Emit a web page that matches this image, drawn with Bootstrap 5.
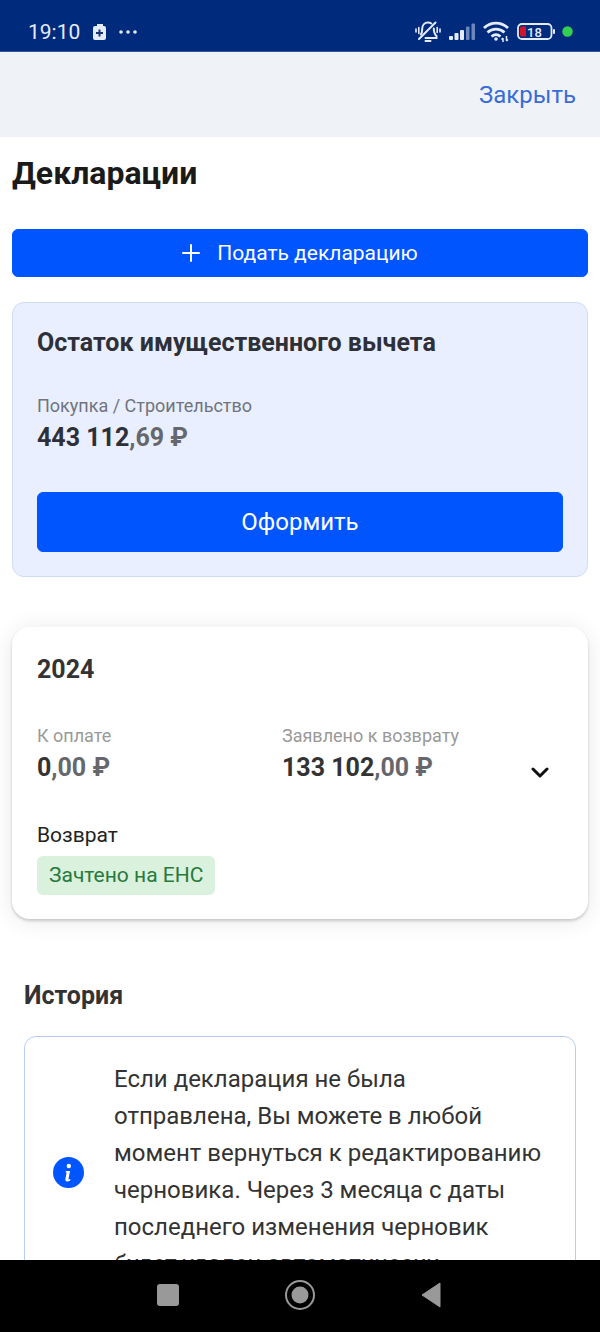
<!DOCTYPE html>
<html lang="ru">
<head>
<meta charset="utf-8">
<meta name="viewport" content="width=device-width, initial-scale=1">
<title>Декларации</title>
<link href="https://cdn.jsdelivr.net/npm/bootstrap@5.3.0/dist/css/bootstrap.min.css" rel="stylesheet">
<style>
  body { font-family: Roboto, "Noto Sans", sans-serif; color: #333; background: #fff; }
  svg { display: block; flex: none; }
  .status-bar { background: #002a7c; color: #e4ecfb; height: 52px; padding: 14px 27px 0 28px; gap: 8px; border-bottom: 1px solid #33589b; }
  .clock { font-size: 21px; line-height: 36px; }
  .battery { margin-right: -2px; }
  .top-bar { background: #eff3f7; height: 85px; padding: 0 24px; }
  .close-link { color: #3a6cd8; font-size: 24px; line-height: 36px; }
  .screen { min-height: 0; overflow-y: auto; scrollbar-width: none; padding: 16px 12px 24px; }
  .screen::-webkit-scrollbar { display: none; }
  .page-title { font-size: 32px; line-height: 40px; font-weight: 700; color: #1a1a1a; margin-bottom: 36px; }
  .btn-fill { --bs-btn-color: #fff; --bs-btn-bg: #0055ff; --bs-btn-border-color: #0055ff; --bs-btn-hover-color: #fff; --bs-btn-hover-bg: #0048d9; --bs-btn-hover-border-color: #0048d9; --bs-btn-border-radius: 6px; }
  .btn-new { height: 48px; font-size: 21px; line-height: 32px; gap: 17px; margin-bottom: 25px; }
  .btn-apply { height: 60px; font-size: 24px; line-height: 36px; margin-top: 36px; }
  .deduction { background: #e9effe; border: 1px solid #cfdcf2; border-radius: 12px; padding: 24px; margin-bottom: 50px; }
  .year-card { border: 0; border-radius: 18px; padding: 27px 25px 24px; margin-bottom: 61px; box-shadow: 0 2px 3px rgba(0,0,0,.18), 0 2px 24px rgba(0,0,0,.09); }
  .heading { font-size: 25px; line-height: 32px; font-weight: 700; margin: 0; }
  .deduction .heading { margin-bottom: 33px; }
  .deduction .heading, .deduction .amount { color: #2d3038; }
  .caption { font-size: 18px; line-height: 28px; color: #999; }
  .deduction .caption { color: #70747f; }
  .amount { font-size: 25px; line-height: 36px; font-weight: 700; }
  .amount span { color: #66676c; }
  .sums { display: grid; grid-template-columns: 1fr 1fr 36px; margin: 36px 0 33px; }
  .toggle { color: #111; padding: 0 0 2px 4px; }
  .refund { font-size: 21px; line-height: 32px; color: #222; margin-bottom: 5px; }
  .tag { font-size: 21px; line-height: 39px; font-weight: 400; color: #287a3c; background: #d9f1dd; border-radius: 6px; padding: 0 12px; }
  .history { padding: 0 12px; }
  .notice { border: 1px solid #b9cbee; border-radius: 12px; padding: 24px 28px; gap: 30px; margin-top: 24px; }
  .notice p { font-size: 24px; line-height: 37px; margin: 0; }
  .nav-bar { background: #000; height: 72px; padding: 0 151px 0 150px; color: #999; flex: none; }
  .nav-bar button { color: inherit; width: 36px; height: 70px; }
</style>
</head>
<body class="vh-100 d-flex flex-column overflow-hidden">
  <div class="status-bar d-flex flex-shrink-0 align-items-start">
    <span class="clock">19:10</span>
    <svg class="me-auto" width="60" height="36" viewBox="0 0 60 36" fill="#e4ecfb">
      <rect x="9" y="10" width="6" height="2"/>
      <rect x="5" y="12" width="13" height="14" rx="2"/>
      <path d="M11.500 15.500v7M8 19h7" stroke="#1d3474" stroke-width="2"/>
      <circle cx="33" cy="18" r="1.800"/><circle cx="40" cy="18" r="1.800"/><circle cx="47" cy="18" r="1.800"/>
    </svg>
    <svg width="26" height="36" viewBox="0 0 26 36" fill="none" stroke="#e4ecfb" stroke-width="2" stroke-linecap="round">
      <path d="M4 25L20.500 8.500"/>
      <path d="M5.800 20.500c1.200-1.500 1.400-3 1.400-5.500 0-3.800 2.300-6.500 5.800-6.500 1.300 0 2.400.4 3.300 1M18.800 14.500c0 3.500.4 5.500 2.700 7.500v2H10.500M10.500 27h5"/>
      <path d="M1 15v3M3.800 13.500v6M25 15v3M22.200 13.500v5" stroke-width="1.600"/>
    </svg>
    <svg width="26" height="36" viewBox="0 0 26 36" fill="#e4ecfb">
      <rect y="22" width="4" height="4" rx="1"/><rect x="5.500" y="19" width="4" height="7" rx="1"/><rect x="11" y="16" width="4" height="10" rx="1"/>
      <g fill="#6d87bd"><rect x="17" y="12.500" width="3.500" height="13.500" rx="1"/><rect x="22.500" y="9.500" width="3.500" height="16.500" rx="1"/></g>
    </svg>
    <svg width="26" height="36" viewBox="0 0 26 36" fill="none" stroke="#e4ecfb" stroke-width="2.800">
      <path d="M1 14c7-6.500 17-6.500 24 0M4.500 18.500c5-4.500 12-4.500 17 0M8.500 22.500c3-2.500 6-2.500 9 0"/>
      <circle cx="13" cy="25" r="1.800" fill="#e4ecfb" stroke="none"/>
      <path d="M20 24v4M23.500 22v5M18.500 25.500l1.500-1.500M25 25.500l-1.500 1.500" stroke-width="1.500"/>
    </svg>
    <svg class="battery" width="39" height="36" viewBox="0 0 39 36">
      <rect x="1" y="10" width="33.500" height="15" rx="4" fill="none" stroke="#e4ecfb" stroke-width="1.800"/>
      <path d="M5 12.500h4v10H5q-2 0-2-2v-6q0-2 2-2z" fill="#d0142c"/>
      <rect x="36" y="15" width="2" height="5" rx="1" fill="#e4ecfb"/>
      <text x="17.500" y="22.500" text-anchor="middle" font-size="13" font-weight="500" fill="#e4ecfb">18</text>
    </svg>
    <svg width="11" height="36" viewBox="0 0 11 36"><circle cx="5.500" cy="17.500" r="5.200" fill="#33d052"/></svg>
  </div>

  <header class="top-bar d-flex flex-shrink-0 align-items-center justify-content-end">
    <a class="close-link text-decoration-none" href="#">Закрыть</a>
  </header>

  <main class="screen flex-grow-1">
    <h1 class="page-title">Декларации</h1>
    <button type="button" class="btn btn-fill btn-new w-100 d-flex align-items-center justify-content-center">
      <svg width="18" height="18" viewBox="0 0 18 18" stroke="#fff" stroke-width="2" stroke-linecap="round"><path d="M9 1v16M1 9h16"/></svg>
      Подать декларацию
    </button>

    <section class="deduction">
      <h2 class="heading">Остаток имущественного вычета</h2>
      <div class="caption">Покупка / Строительство</div>
      <div class="amount">443 112<span>,69 ₽</span></div>
      <button type="button" class="btn btn-fill btn-apply w-100">Оформить</button>
    </section>

    <section class="card year-card">
      <h2 class="heading">2024</h2>
      <div class="sums">
        <div>
          <div class="caption">К оплате</div>
          <div class="amount">0<span>,00 ₽</span></div>
        </div>
        <div>
          <div class="caption">Заявлено к возврату</div>
          <div class="amount">133 102<span>,00 ₽</span></div>
        </div>
        <button type="button" class="toggle btn border-0 d-flex align-items-end" aria-label="Развернуть">
          <svg width="18" height="28" viewBox="0 0 18 28" fill="none" stroke="currentColor" stroke-width="3" stroke-linecap="round" stroke-linejoin="round"><path d="M2 13l7 7 7-7"/></svg>
        </button>
      </div>
      <div class="refund">Возврат</div>
      <span class="tag align-self-start">Зачтено на ЕНС</span>
    </section>

    <section class="history">
      <h2 class="heading">История</h2>
      <div class="notice d-flex align-items-center">
        <svg width="31" height="31" viewBox="0 0 31 31">
          <circle cx="15.500" cy="15.500" r="15.500" fill="#0055ff"/>
          <circle cx="15.800" cy="9" r="2.200" fill="#fff"/>
          <path d="M13 14h4l-1.600 8.500 2-.4-.3 1.600q-2 1-3.600.7-1.500-.4-1.100-2.400l1.200-6.500-1-.2z" fill="#fff"/>
        </svg>
        <p>Если декларация не была отправлена, Вы можете в любой момент вернуться к редактированию черновика. Через 3 месяца с даты последнего изменения черновик будет удален автоматически.</p>
      </div>
    </section>
  </main>

  <nav class="nav-bar d-flex justify-content-between" aria-label="Системная навигация">
    <button type="button" class="btn border-0 p-0 d-flex align-items-center justify-content-center" aria-label="Недавние"><svg width="22" height="22" viewBox="0 0 22 22"><rect width="22" height="22" rx="3" fill="currentColor"/></svg></button>
    <button type="button" class="btn border-0 p-0 d-flex align-items-center justify-content-center" aria-label="Домой"><svg width="30" height="30" viewBox="0 0 30 30"><circle cx="15" cy="15" r="14" fill="none" stroke="currentColor" stroke-width="2"/><circle cx="15" cy="15" r="8.500" fill="currentColor"/></svg></button>
    <button type="button" class="btn border-0 p-0 d-flex align-items-center justify-content-center" aria-label="Назад"><svg width="20" height="26" viewBox="0 0 20 26"><path d="M19 1v24L1 13z" fill="currentColor" stroke="currentColor" stroke-linejoin="round"/></svg></button>
  </nav>
<script src="https://cdn.jsdelivr.net/npm/bootstrap@5.3.0/dist/js/bootstrap.bundle.min.js"></script>
</body>
</html>
